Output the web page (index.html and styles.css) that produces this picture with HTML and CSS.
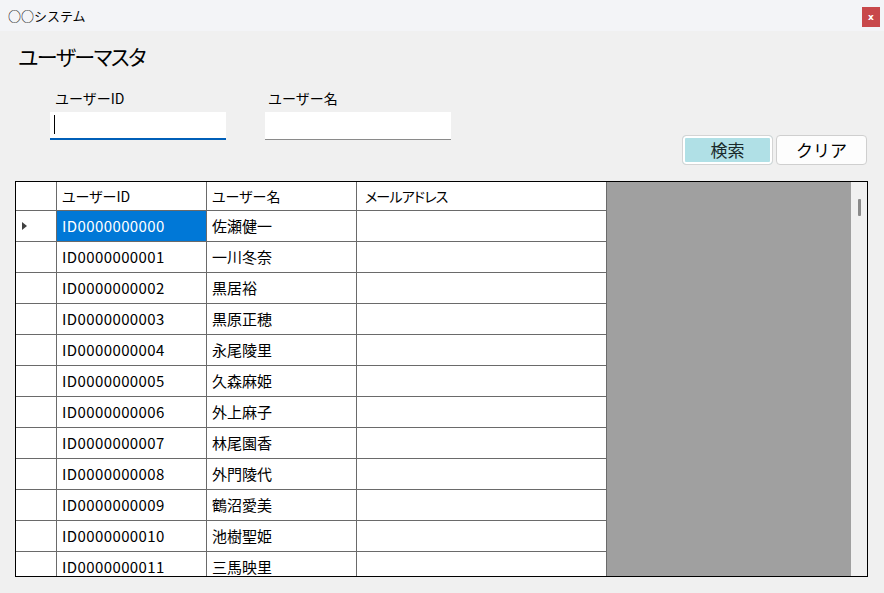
FILE: index.html
```html
<!DOCTYPE html>
<html lang="ja">
<head>
<meta charset="utf-8">
<title>○○システム</title>
<link rel="stylesheet" href="styles.css">
</head>
<body>
<div class="window">
  <div class="titlebar">
    <span class="title">○○システム</span>
    <span class="close">x</span>
  </div>
  <div class="content">
    <h1 class="heading">ユーザーマスタ</h1>
    <div class="search-row">
      <div class="fields">
        <div class="field field-id">
          <label class="label">ユーザーID</label>
          <div class="input input-focus"><span class="caret"></span></div>
        </div>
        <div class="field field-name">
          <label class="label">ユーザー名</label>
          <div class="input"></div>
        </div>
      </div>
      <div class="buttons">
        <button class="btn btn-search">検索</button>
        <button class="btn btn-clear">クリア</button>
      </div>
    </div>
    <div class="grid">
      <div class="table">
        <div class="row head">
          <div class="cell rh"></div>
          <div class="cell c1">ユーザーID</div>
          <div class="cell c2">ユーザー名</div>
          <div class="cell c3">メールアドレス</div>
        </div>
        <div class="row">
          <div class="cell rh"><span class="arrow"></span></div>
          <div class="cell c1 selected">ID0000000000</div>
          <div class="cell c2">佐瀬健一</div>
          <div class="cell c3"></div>
        </div>
        <div class="row"><div class="cell rh"></div><div class="cell c1">ID0000000001</div><div class="cell c2">一川冬奈</div><div class="cell c3"></div></div>
        <div class="row"><div class="cell rh"></div><div class="cell c1">ID0000000002</div><div class="cell c2">黒居裕</div><div class="cell c3"></div></div>
        <div class="row"><div class="cell rh"></div><div class="cell c1">ID0000000003</div><div class="cell c2">黒原正穂</div><div class="cell c3"></div></div>
        <div class="row"><div class="cell rh"></div><div class="cell c1">ID0000000004</div><div class="cell c2">永尾陵里</div><div class="cell c3"></div></div>
        <div class="row"><div class="cell rh"></div><div class="cell c1">ID0000000005</div><div class="cell c2">久森麻姫</div><div class="cell c3"></div></div>
        <div class="row"><div class="cell rh"></div><div class="cell c1">ID0000000006</div><div class="cell c2">外上麻子</div><div class="cell c3"></div></div>
        <div class="row"><div class="cell rh"></div><div class="cell c1">ID0000000007</div><div class="cell c2">林尾園香</div><div class="cell c3"></div></div>
        <div class="row"><div class="cell rh"></div><div class="cell c1">ID0000000008</div><div class="cell c2">外門陵代</div><div class="cell c3"></div></div>
        <div class="row"><div class="cell rh"></div><div class="cell c1">ID0000000009</div><div class="cell c2">鶴沼愛美</div><div class="cell c3"></div></div>
        <div class="row"><div class="cell rh"></div><div class="cell c1">ID0000000010</div><div class="cell c2">池樹聖姫</div><div class="cell c3"></div></div>
        <div class="row"><div class="cell rh"></div><div class="cell c1">ID0000000011</div><div class="cell c2">三馬映里</div><div class="cell c3"></div></div>
      </div>
      <div class="empty"></div>
      <div class="scrollbar"><span class="thumb"></span></div>
    </div>
  </div>
</div>
</body>
</html>
```

FILE: styles.css
```css
* { box-sizing: border-box; }
html, body {
  margin: 0;
  padding: 0;
}
body {
  background: #f0f0f0;
  font-family: "Noto Sans CJK JP", "Noto Sans", sans-serif;
  color: #000;
  width: 884px;
  height: 593px;
  overflow: hidden;
}
.window {
  display: flex;
  flex-direction: column;
  height: 593px;
}
.titlebar {
  height: 31px;
  background: #f3f4f7;
  display: flex;
  align-items: center;
  justify-content: space-between;
  padding: 0 4px 0 8px;
}
.title {
  font-size: 13px;
  line-height: 18px;
}
.close {
  width: 18px;
  height: 20px;
  background: #c8484b;
  color: #fff;
  font-family: "DejaVu Sans", sans-serif;
  font-weight: bold;
  font-size: 9px;
  line-height: 20px;
  text-align: center;
  margin-top: 2px;
}
.content {
  padding: 0 16px 0 15px;
  display: flex;
  flex-direction: column;
}
.heading {
  margin: 11px 0 0 3px;
  font-size: 21px;
  font-weight: normal;
  line-height: 28px;
  font-feature-settings: "palt";
  letter-spacing: -1.5px;
}
.search-row {
  display: flex;
  justify-content: space-between;
  align-items: flex-start;
  margin-top: 18px;
}
.fields {
  display: flex;
  gap: 39px;
  margin-left: 35px;
}
.field {
  display: flex;
  flex-direction: column;
  gap: 4px;
}
.field-id { width: 176px; }
.field-name { width: 186px; }
.label {
  font-size: 14px;
  line-height: 20px;
  padding-left: 5px;
}
.field-name .label { padding-left: 3px; }
.input {
  height: 28px;
  background: #fff;
  border-bottom: 1px solid #8a8a8a;
  position: relative;
}
.input-focus {
  border-bottom: 2px solid #005fb8;
}
.caret {
  position: absolute;
  left: 4px;
  top: 3px;
  width: 1px;
  height: 19px;
  background: #000;
}
.buttons {
  display: flex;
  gap: 3px;
  margin-top: 47px;
  margin-right: 1px;
}
.btn {
  width: 91px;
  height: 30px;
  font-family: "Noto Sans CJK JP", sans-serif;
  font-size: 17px;
  line-height: 20px;
  color: #000;
  border: 1px solid #cfcfcf;
  border-radius: 4px;
  padding: 0;
}
.btn-search {
  background: #b0e0e6;
  box-shadow: inset 0 0 0 2px #fff;
  border-color: #d4d4d4;
  color: #1a2a2a;
}
.btn-clear {
  background: #fdfdfd;
}
.grid {
  margin-top: 16px;
  height: 396px;
  border: 1px solid #000;
  display: flex;
  overflow: hidden;
}
.table {
  width: 591px;
  display: flex;
  flex-direction: column;
  background: #fff;
  flex-shrink: 0;
}
.row {
  display: flex;
  height: 31px;
  flex-shrink: 0;
}
.row.head { height: 29px; }
.cell {
  border-right: 1px solid #6a6a6a;
  border-bottom: 1px solid #6a6a6a;
  font-size: 15px;
  line-height: 20px;
  padding: 0 5px;
  display: flex;
  align-items: center;
  white-space: nowrap;
  overflow: hidden;
  font-feature-settings: "palt";
}
.head .cell { font-size: 14px; }
.head .c3 { padding-left: 8px; letter-spacing: -0.8px; }
.c1 { letter-spacing: 0.4px; }
.head .c1 { letter-spacing: 0; }
.rh { width: 41px; position: relative; }
.c1 { width: 150px; }
.c2 { width: 150px; }
.c3 { width: 250px; }
.selected {
  background: #0078d7;
  color: #fff;
}
.arrow {
  width: 0;
  height: 0;
  border-top: 4px solid transparent;
  border-bottom: 4px solid transparent;
  border-left: 5px solid #404040;
  margin-left: 1px;
}
.empty {
  width: 244px;
  background: #a0a0a0;
  flex-shrink: 0;
}
.scrollbar {
  flex: 1;
  background: #f0f0f0;
  position: relative;
}
.thumb {
  position: absolute;
  left: 7px;
  top: 17px;
  width: 3px;
  height: 17px;
  background: #8a8a8a;
  border-radius: 1px;
}
```
